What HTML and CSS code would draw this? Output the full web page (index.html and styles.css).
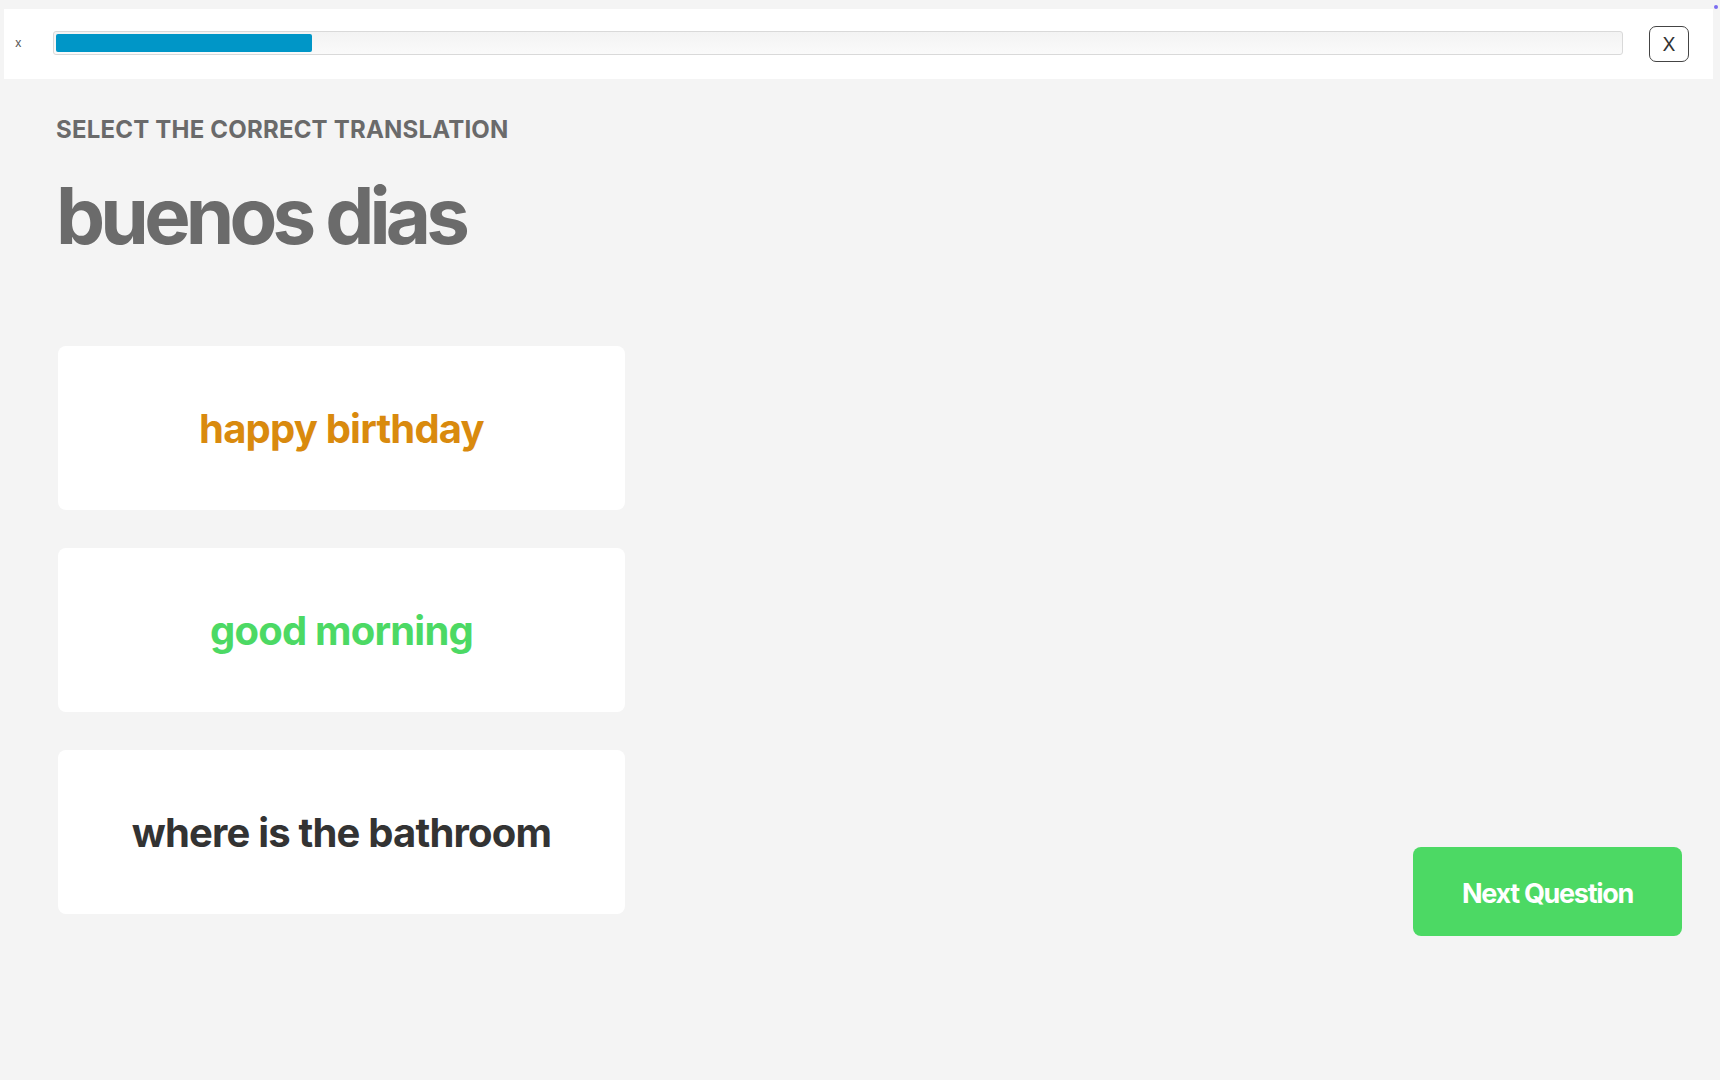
FILE: index.html
```html
<!DOCTYPE html>
<html lang="en">
<head>
<meta charset="utf-8">
<title>Quiz</title>
<link rel="stylesheet" href="styles.css">
</head>
<body>
<header class="topbar">
  <span class="close-small">x</span>
  <div class="progress"><div class="progress-fill" style="width:16.4%"></div></div>
  <button class="close-btn">X</button>
</header>
<span class="dot"></span>
<main class="quiz">
  <div class="left">
    <h2 class="prompt">SELECT THE CORRECT TRANSLATION</h2>
    <h1 class="word">buenos dias</h1>
    <div class="options">
      <div class="option orange">happy birthday</div>
      <div class="option green">good morning</div>
      <div class="option dark">where is the bathroom</div>
    </div>
  </div>
  <button class="next">Next Question</button>
</main>
</body>
</html>
```
FILE: styles.css
```css
* { box-sizing: border-box; }
html, body { margin: 0; padding: 0; }
body {
  background: #f4f4f4;
  font-family: Inter, "Noto Sans", sans-serif;
  width: 1720px;
  height: 1080px;
  overflow: hidden;
  position: relative;
}
.topbar {
  margin: 9px 7px 0 4px;
  height: 70px;
  background: #ffffff;
  display: flex;
  align-items: center;
  padding: 0 24px 0 11px;
}
.close-small {
  font-size: 12px;
  color: #555;
  width: 38px;
  line-height: 1;
  margin-top: -2px;
}
.progress {
  flex: 1;
  height: 24px;
  border: 1px solid #d9d9d9;
  border-radius: 3px;
  background: linear-gradient(#f3f3f3, #fafafa);
  padding: 2px;
  margin-top: -2px;
}
.progress-fill {
  height: 100%;
  background: #0096c7;
  border-radius: 2px;
}
.close-btn {
  margin-left: 26px;
  width: 40px;
  height: 36px;
  border: 1.5px solid #444;
  border-radius: 7px;
  background: #fff;
  font-family: Inter, "Noto Sans", sans-serif;
  font-size: 19px;
  color: #333;
  padding: 0;
  line-height: 1;
}
.dot {
  position: absolute;
  top: 5px;
  right: 2px;
  width: 4px;
  height: 4px;
  border-radius: 50%;
  background: #7a6cf0;
}
.quiz {
  display: flex;
  justify-content: space-between;
  align-items: flex-end;
  padding: 0 38px 0 56px;
}
.prompt {
  margin: 36px 0 0;
  font-size: 24px;
  line-height: 30px;
  font-weight: 700;
  color: #6a6a6a;
  letter-spacing: 0.2px;
}
.word {
  margin: 32px 0 0;
  font-size: 78px;
  line-height: 78px;
  font-weight: 700;
  color: #6b6b6b;
  letter-spacing: -4.8px;
}
.options {
  margin: 91px 0 0 2px;
  display: flex;
  flex-direction: column;
  gap: 38px;
}
.option {
  width: 567px;
  height: 164px;
  background: #ffffff;
  border-radius: 8px;
  display: flex;
  align-items: center;
  justify-content: center;
  font-size: 40px;
  font-weight: 700;
  letter-spacing: -0.8px;
}
.orange { color: #d98a0e; }
.green { color: #4cd964; }
.dark { color: #333333; }
.next {
  width: 269px;
  height: 89px;
  margin-bottom: -22px;
  background: #4cd964;
  border: none;
  border-radius: 8px;
  color: #ffffff;
  font-family: Inter, "Noto Sans", sans-serif;
  font-size: 27px;
  font-weight: 700;
  letter-spacing: -1.3px;
  padding: 4px 0 0;
}
```
